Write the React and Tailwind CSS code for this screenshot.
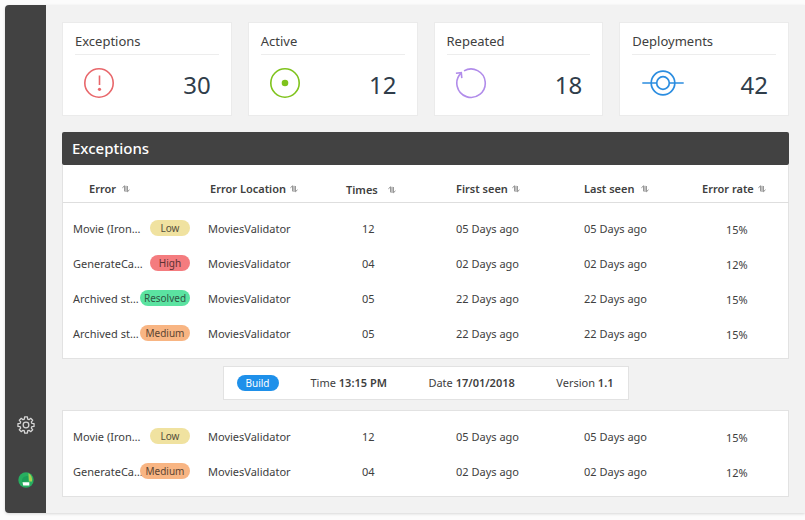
import React from "react";

const BADGE_STYLES = {
  Low: "min-w-10 bg-[#f0e2a0] text-[#55503c]",
  High: "min-w-10 bg-[#f47c7f] text-[#5b3233]",
  Resolved: "min-w-[50px] bg-[#5be3a1] text-[#2f5544]",
  Medium: "min-w-[50px] bg-[#f8b583] text-[#5b4432]",
};

const exceptions = [
  ["Movie (Iron…", "Low", "MoviesValidator", "12", "05 Days ago", "05 Days ago", "15%"],
  ["GenerateCa…", "High", "MoviesValidator", "04", "02 Days ago", "02 Days ago", "12%"],
  ["Archived st…", "Resolved", "MoviesValidator", "05", "22 Days ago", "22 Days ago", "15%"],
  ["Archived st…", "Medium", "MoviesValidator", "05", "22 Days ago", "22 Days ago", "15%"],
];

const olderExceptions = [
  ["Movie (Iron…", "Low", "MoviesValidator", "12", "05 Days ago", "05 Days ago", "15%"],
  ["GenerateCa…", "Medium", "MoviesValidator", "04", "02 Days ago", "02 Days ago", "12%"],
];

const columns = [
  { label: "Error", cell: "pt-3 pl-[26px]", gap: "gap-1.5" },
  { label: "Error Location", cell: "pt-3 pl-0.5", gap: "gap-1" },
  { label: "Times", cell: "pt-3.5", gap: "gap-2.5" },
  { label: "First seen", cell: "pt-3", gap: "gap-1" },
  { label: "Last seen", cell: "pt-3", gap: "gap-1.5" },
  { label: "Error rate", cell: "pt-3", gap: "gap-1" },
];

// Outline of an eight-toothed gear centred on (12, 12).
const gearPath =
  Array.from({ length: 8 }, (_, i) => {
    const base = i * 45;
    return [
      [8.2, base - 15],
      [10.9, base - 10],
      [10.9, base + 10],
      [8.2, base + 15],
    ]
      .map(([r, deg]) => {
        const a = (deg * Math.PI) / 180;
        return `${(12 + r * Math.sin(a)).toFixed(2)} ${(12 - r * Math.cos(a)).toFixed(2)}`;
      })
      .join("L");
  }).reduce((d, part) => (d ? `${d}L${part}` : `M${part}`), "") + "Z";

function GearIcon() {
  return (
    <svg viewBox="0 0 24 24" className="size-[18px]" fill="none" stroke="currentColor" strokeWidth="1.7" strokeLinejoin="round" aria-hidden="true">
      <path d={gearPath} />
      <circle cx="12" cy="12" r="3.8" />
    </svg>
  );
}

function AvatarIcon() {
  return (
    <svg viewBox="0 0 16 16" className="size-4" aria-hidden="true">
      <circle cx="8" cy="8" r="7.7" fill="#27ae60" />
      <path d="M4 10C3.4 6 6 4 10 4v5z" fill="#1c9f59" />
      <path d="M10.4 1.3Q14.5 3 14 9.5h-3z" fill="#a6d152" />
      <path d="M4.5 10.2h6.8v3.4H5.2z" fill="#ffffff" />
    </svg>
  );
}

function SortIcon() {
  return (
    <svg viewBox="0 0 8 8" className="size-2 text-[#8d8d8d]" fill="none" stroke="currentColor" strokeWidth="1" aria-hidden="true">
      <path d="M.4 2.8 2.6.8V6.4M4 .8v6.2M5.4 1v5.8l2.1-2" />
    </svg>
  );
}

function AlertIcon() {
  return (
    <svg viewBox="0 0 44 32" className="h-8 w-11" fill="none" stroke="#e8666a" strokeWidth="1.6" aria-hidden="true">
      <circle cx="22" cy="16" r="14.2" />
      <path d="M22.5 8.5v9.5" />
      <circle cx="22.5" cy="22.3" r="1.6" fill="#e8666a" stroke="none" />
    </svg>
  );
}

function ActiveIcon() {
  return (
    <svg viewBox="0 0 44 32" className="h-8 w-11" fill="none" stroke="#7fc31c" strokeWidth="1.6" aria-hidden="true">
      <circle cx="22" cy="16" r="14.2" />
      <circle cx="22" cy="16" r="3.3" fill="#7fc31c" stroke="none" />
    </svg>
  );
}

function RepeatIcon() {
  return (
    <svg viewBox="0 0 44 32" className="h-8 w-11" fill="none" stroke="#b18cea" strokeWidth="1.6" aria-hidden="true">
      <path d="M15 3.9A14.2 14.2 0 1 1 11.8 6.4" />
      <path d="M6.9 6.3 12.3 5.7l.5 5.4" />
    </svg>
  );
}

function DeployIcon() {
  return (
    <svg viewBox="0 0 52 32" className="h-8 w-[52px]" fill="none" stroke="#2b8de0" strokeWidth="1.7" aria-hidden="true">
      <circle cx="29" cy="16" r="11.8" />
      <circle cx="29" cy="16" r="6.3" />
      <path d="M8.3 16h14.4M35.3 16h14.4" />
    </svg>
  );
}

const stats = [
  { label: "Exceptions", value: 30, Icon: AlertIcon },
  { label: "Active", value: 12, Icon: ActiveIcon },
  { label: "Repeated", value: 18, Icon: RepeatIcon },
  { label: "Deployments", value: 42, Icon: DeployIcon },
];

function StatCard({ label, value, Icon }) {
  return (
    <section className="flex-1 border border-[#ebebeb] bg-white px-3 pt-2 pb-3">
      <h2 className="border-b border-[#ededed] pb-[3px] text-[13px] leading-5">{label}</h2>
      <div className="flex items-start justify-between pt-3 pr-2 pl-0.5">
        <Icon />
        <span className="text-2xl leading-9 text-[#2f3d4a]">{value}</span>
      </div>
    </section>
  );
}

function ExceptionTable({ rows, label, hideHeader }) {
  return (
    <table className="w-full table-fixed border-collapse text-left text-[11px] leading-4" aria-label={label}>
      <colgroup>
        <col className="w-[145px]" />
        <col className="w-[138px]" />
        <col className="w-[110px]" />
        <col className="w-[128px]" />
        <col className="w-[118px]" />
        <col className="w-[87px]" />
      </colgroup>
      {!hideHeader && (
        <thead>
          <tr className="h-[37px] border-b border-[#dedede]">
            {columns.map(({ label: name, cell, gap }) => (
              <th key={name} scope="col" className={`align-middle font-semibold ${cell}`}>
                <button type="button" className={`flex items-center whitespace-nowrap ${gap}`}>
                  {name}
                  <SortIcon />
                </button>
              </th>
            ))}
          </tr>
        </thead>
      )}
      <tbody className="before:block before:h-[9px]">
        {rows.map(([error, severity, location, times, first, last, rate], i) => (
          <tr key={i} className="h-[35px]">
            <td className="pr-[18px] pl-2.5">
              <div className="flex items-center justify-between whitespace-nowrap">
                <span className="min-w-0 flex-1">{error}</span>
                <span className={`mb-0.5 rounded-full text-center text-[10px] leading-4 ${BADGE_STYLES[severity]}`}>
                  {severity}
                </span>
              </div>
            </td>
            <td>{location}</td>
            <td className="pl-4">{times}</td>
            <td>{first}</td>
            <td>{last}</td>
            <td className="pt-0.5 pl-6">{rate}</td>
          </tr>
        ))}
      </tbody>
    </table>
  );
}

export default function App() {
  return (
    <div className="min-h-screen bg-[#fcfcfc] pt-[5px] pb-[7px] pl-[5px] font-['Noto_Sans','Open_Sans',sans-serif] text-[#404040]">
      <div className="flex rounded-l bg-[#f2f2f2] shadow-[0_1px_3px_rgba(0,0,0,0.15)]">
        <nav className="flex w-[41px] shrink-0 flex-col items-center justify-end gap-[38px] rounded-l bg-[#424242] pb-[25px]" aria-label="Main">
          <button type="button" aria-label="Settings" className="text-[#d6d6d6]">
            <GearIcon />
          </button>
          <button type="button" aria-label="Account">
            <AvatarIcon />
          </button>
        </nav>
        <main className="min-w-0 flex-1 px-4 pt-[17px] pb-4">
          <div className="flex gap-4">
            {stats.map((stat) => (
              <StatCard key={stat.label} {...stat} />
            ))}
          </div>
          <h1 className="mt-4 rounded-xs bg-[#424242] px-2.5 text-[15px] leading-[33px] font-medium text-white">Exceptions</h1>
          <section className="border border-t-0 border-[#e2e2e2] bg-white pb-1.5">
            <ExceptionTable rows={exceptions} label="Exceptions since the build" />
          </section>
          <section className="mx-auto mt-[7px] mb-2.5 flex h-[34px] w-[406px] max-w-full items-center border border-[#e2e2e2] bg-white pr-3.5 pl-[13px] text-[11px] leading-4 whitespace-nowrap">
            <span className="w-[42px] rounded-full bg-[#1e90ea] text-center text-[10px] leading-4 text-white">Build</span>
            <div className="ml-8 flex flex-1 justify-between">
              <span>Time <b className="font-semibold">13:15 PM</b></span>
              <span>Date <b className="font-semibold">17/01/2018</b></span>
              <span>Version <b className="font-semibold">1.1</b></span>
            </div>
          </section>
          <section className="border border-[#e2e2e2] bg-white pb-1.5">
            <ExceptionTable rows={olderExceptions} label="Exceptions before the build" hideHeader />
          </section>
        </main>
      </div>
    </div>
  );
}
